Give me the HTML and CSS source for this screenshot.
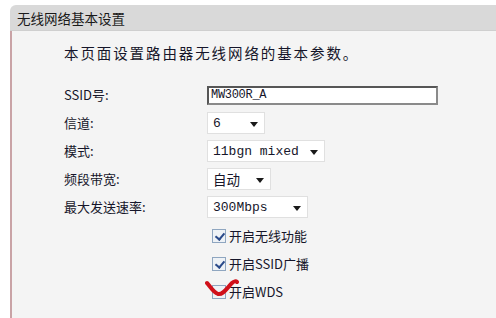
FILE: index.html
```html
<!DOCTYPE html>
<html lang="zh-CN">
<head>
    <meta charset="UTF-8">
    <title>无线网络基本设置</title>
    <link rel="stylesheet" href="styles.css">
</head>
<body>
    <div class="panel">
        <div class="panel-title">无线网络基本设置</div>
        <div class="panel-body">
            <p class="intro">本页面设置路由器无线网络的基本参数。</p>

            <div class="form">
                <label class="label">SSID号:</label>
                <div class="input">MW300R_A</div>

                <label class="label">信道:</label>
                <div class="select w-channel"><span>6</span><i class="arrow"></i></div>

                <label class="label">模式:</label>
                <div class="select w-mode"><span>11bgn mixed</span><i class="arrow"></i></div>

                <label class="label">频段带宽:</label>
                <div class="select w-band"><span class="cn">自动</span><i class="arrow"></i></div>

                <label class="label">最大发送速率:</label>
                <div class="select w-rate"><span>300Mbps</span><i class="arrow"></i></div>
            </div>

            <div class="checks">
                <div class="check"><span class="box on"></span>开启无线功能</div>
                <div class="check"><span class="box on"></span>开启SSID广播</div>
                <div class="check wds">
                    <span class="box"></span>开启WDS
                    <svg class="mark" width="34" height="20" viewBox="0 0 34 20">
                        <path d="M2 5 C5 8, 8 14, 13 16 C18 17, 22 10, 27 5 C29 3, 31 3, 32 4" fill="none" stroke="#d0101a" stroke-width="4" stroke-linecap="round"/>
                    </svg>
                </div>
            </div>
        </div>
    </div>
</body>
</html>
```

FILE: styles.css
```css
* { margin: 0; padding: 0; box-sizing: border-box; }
body {
    background: #ffffff;
    font-family: "Noto Sans CJK SC", "Liberation Sans", sans-serif;
    color: #16162a;
    width: 496px; height: 318px; overflow: hidden;
}
.panel { padding: 5px 0 0 10px; }
.panel-title {
    height: 26px; line-height: 26px; padding-left: 7px;
    background: #d9d9d9; border-top-left-radius: 6px;
    font-size: 13.5px; color: #1a1a1a;
    border-bottom: 1px solid #cfcfcf;
}
.panel-body {
    background: #f4f4f4; border-left: 2px solid #c9a3a6;
    height: 300px; padding: 12px 0 0 52px;
}
.intro { font-size: 14.5px; letter-spacing: 1.9px; line-height: 20px; }
.form {
    display: grid; grid-template-columns: 143px auto;
    row-gap: 6px; margin-top: 21px; align-items: center; justify-items: start;
}
.label { font-size: 13px; line-height: 22px; font-family: "Noto Sans CJK SC", sans-serif; }
.input {
    width: 231px; height: 19px; background: #fff;
    border: 2px solid #565656; border-right-color: #8a8a8a; border-bottom-color: #8a8a8a;
    font-family: "Liberation Mono", monospace; font-size: 12px; line-height: 15px;
    padding-left: 2px; letter-spacing: -0.3px;
}
.select {
    display: flex; align-items: center; justify-content: space-between;
    height: 22px; background: #fff; border: 1px solid #e0e0e0;
    font-family: "Liberation Mono", monospace; font-size: 13px;
    padding: 0 6px 0 5px;
}
.select .cn { font-family: "Noto Sans CJK SC", sans-serif; font-size: 13.5px; }
.arrow {
    width: 0; height: 0; border-left: 4px solid transparent; border-right: 4px solid transparent;
    border-top: 5px solid #1a1a1a; margin-top: 2px;
}
.w-channel { width: 58px; }
.w-mode { width: 118px; }
.w-band { width: 64px; }
.w-rate { width: 101px; }
.checks {
    display: flex; flex-direction: column; gap: 8px;
    margin: 8px 0 0 148px;
}
.check {
    position: relative; display: flex; align-items: center; gap: 3px;
    font-size: 13px; line-height: 20px; height: 20px;
}
.box {
    width: 14px; height: 14px; background: #eef2f6;
    border: 1px solid #8fa6c0; position: relative;
}
.box.on::after {
    content: ""; position: absolute; left: 4px; top: 1px;
    width: 4px; height: 7px; border: solid #2a4a8a; border-width: 0 2px 2px 0;
    transform: rotate(40deg);
}
.wds .mark { position: absolute; left: -7px; top: -4px; }
```
